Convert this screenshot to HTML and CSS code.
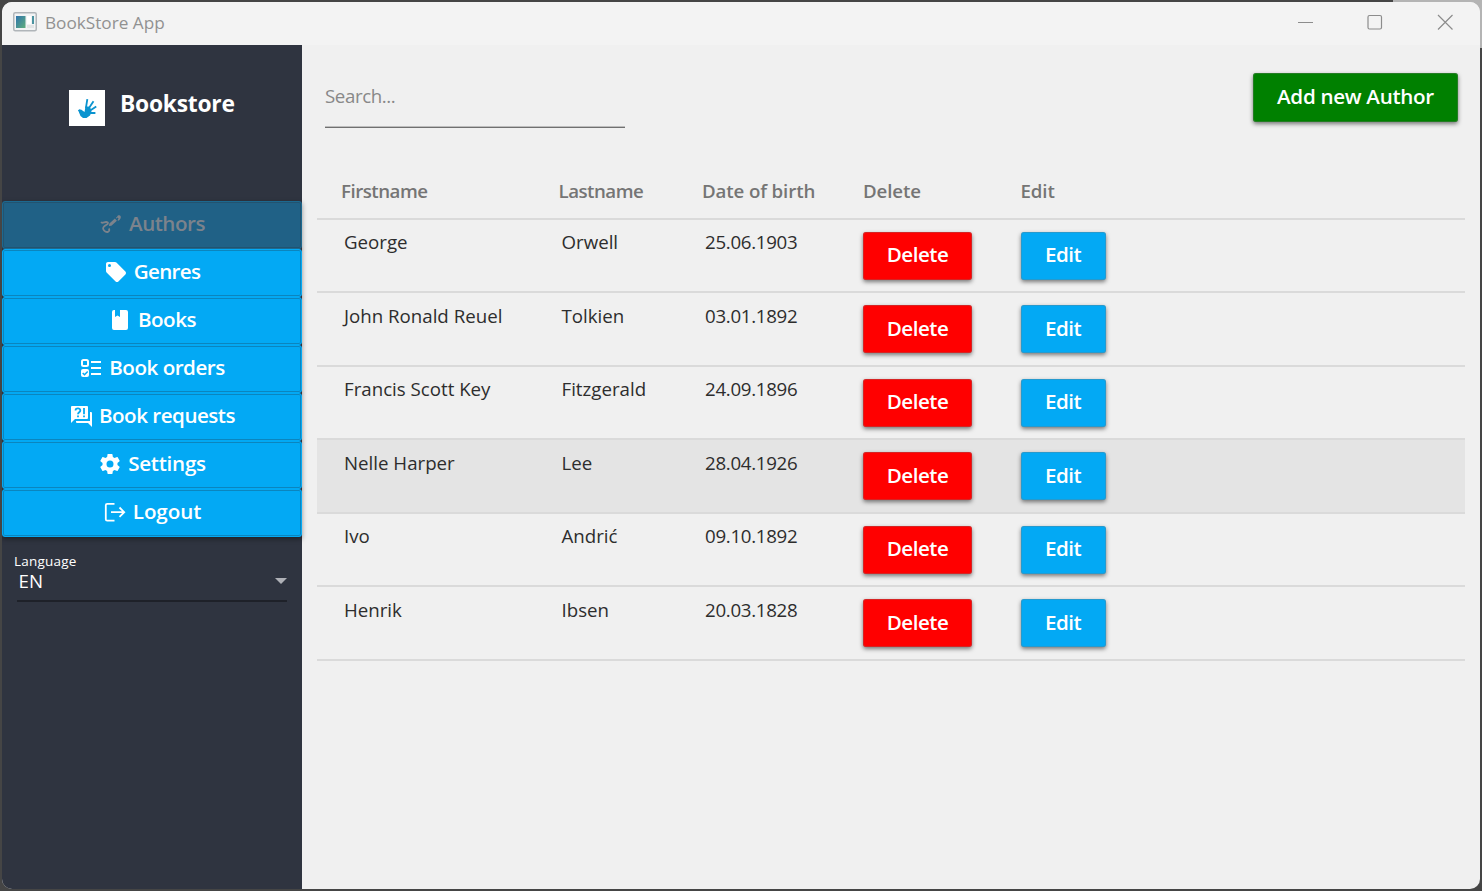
FILE: index.html
```html
<!DOCTYPE html>
<html lang="en">
<head>
<meta charset="utf-8">
<title>BookStore App</title>
<link rel="stylesheet" href="styles.css">
</head>
<body>
<div class="window">
  <header class="titlebar">
    <svg class="app-icon" width="24" height="20" viewBox="0 0 24 20">
      <defs><linearGradient id="g" x1="0" y1="0" x2="1" y2="1"><stop offset="0" stop-color="#2f74ad"/><stop offset="1" stop-color="#5fae7c"/></linearGradient></defs>
      <rect x=".75" y=".75" width="22.5" height="18" rx="1.5" fill="#f2f3f4" stroke="#b0b5b9" stroke-width="1.5"/>
      <rect x="3" y="4" width="9.5" height="12" fill="url(#g)"/>
      <rect x="14" y="4" width="4" height="8" fill="#fff"/><rect x="14" y="13" width="7" height="3" fill="#e2e4e5"/>
      <rect x="19" y="4" width="2" height="8" fill="#4b93a0"/>
    </svg>
    <span class="title">BookStore App</span>
    <div class="controls">
      <svg width="16" height="16" viewBox="0 0 16 16"><path d="M1 8.500h15"/></svg>
      <svg width="16" height="16" viewBox="0 0 16 16"><rect x="1" y="1.500" width="13.500" height="13.500" rx="1.500"/></svg>
      <svg width="16" height="16" viewBox="0 0 16 16"><path d="M1 1l14.500 14.500M15.500 1l-14.500 14.500"/></svg>
    </div>
  </header>
  <div class="body">
    <aside class="sidebar">
      <div class="brand">
        <svg class="logo" width="36" height="36" viewBox="0 0 36 36">
          <rect width="36" height="36" fill="#fff"/>
          <g fill="none" stroke="#0a93cf" stroke-linecap="square" stroke-width="1.800"><path d="M17 17.500L18.200 10M20 18l4-6M22 20l4.500-3M22 23h3.500M10.500 20.500l3.500 3"/></g>
          <path d="M9 20l3-.5 3.500 2.500 1-5.500h3l2 1.500 1 4-1.500 3.500-3.500 2.500h-3.500l-2.500-2z" fill="#0a93cf"/>
        </svg>
        <span class="brand-name">Bookstore</span>
      </div>
      <nav class="nav">
        <button class="nav-item disabled"><svg width="24" height="24" viewBox="0 0 24 24"><path d="M2.300 9.800C2.800 11.800 5 10.200 7 10c2.800-.2 2.300 1.700.5 2.700-2.300 1.300-4 2.300-3.300 4.300.8 2.300 3.200 3.400 4.800 2.800 1.500-.6 1.600-2 .8-3.300" fill="none" stroke="currentColor" stroke-width="1.800"/><path d="M10.400 11.600l5.500-5 2 2.200-5.500 4.900-2.500.3zM16.800 5.900l1.500-1.300c.2-1.600 2.700-2 3.400-.4.600 1.900-.6 3.500-2.400 4.600l-.8-.6 1-1.900-.9-.8-1 .9z"/></svg><span class="w-authors">Authors</span></button>
        <button class="nav-item"><svg width="24" height="24" viewBox="0 0 24 24"><path d="M5.500 7A1.500 1.500 0 0 1 4 5.500 1.500 1.500 0 0 1 5.500 4 1.500 1.500 0 0 1 7 5.500 1.500 1.500 0 0 1 5.500 7m15.910 4.580l-9-9C12.050 2.220 11.550 2 11 2H4c-1.110 0-2 .89-2 2v7c0 .55.220 1.050.59 1.410l8.990 9c.37.360.87.590 1.420.590s1.050-.230 1.410-.590l7-7c.37-.360.590-.860.590-1.410 0-.560-.230-1.060-.590-1.420z"/></svg><span class="w-genres">Genres</span></button>
        <button class="nav-item"><svg width="24" height="24" viewBox="0 0 24 24"><path d="M6 2h1v7l2.500-1.500L12 9V2h6a2 2 0 0 1 2 2v16a2 2 0 0 1-2 2H6a2 2 0 0 1-2-2V4a2 2 0 0 1 2-2z"/></svg><span class="w-books">Books</span></button>
        <button class="nav-item"><svg width="24" height="24" viewBox="0 0 24 24"><path d="M12 5h10v2H12zm0 6h10v2H12zm0 6h10v2H12z"/><rect x="3" y="4" width="6" height="6" rx="1.500" fill="none" stroke="currentColor" stroke-width="2"/><rect x="2" y="13" width="8" height="8" rx="2"/><path d="M3.700 17l1.800 1.800L8.700 15.500" fill="none" stroke="#03a9f4" stroke-width="1.500"/></svg><span class="w-orders">Book orders</span></button>
        <button class="nav-item"><svg width="24" height="24" viewBox="0 0 24 24"><path d="M18 15H6l-4 4V3a1 1 0 0 1 1-1h15a1 1 0 0 1 1 1v11a1 1 0 0 1-1 1m5-6v14l-4-4H8a1 1 0 0 1-1-1v-1h14V8h1a1 1 0 0 1 1 1"/><path d="M6.500 6.500C6.500 3.500 11.500 3.600 11.300 6.600 11.200 8.300 9 8.300 9 10.200M9 11.500v1.800M15 4v6.200M15 11.500v1.800" fill="none" stroke="#03a9f4" stroke-width="1.800"/></svg><span class="w-requests">Book requests</span></button>
        <button class="nav-item"><svg width="24" height="24" viewBox="0 0 24 24"><path d="M12 15.500A3.500 3.500 0 0 1 8.500 12 3.500 3.500 0 0 1 12 8.500a3.500 3.500 0 0 1 3.500 3.500 3.500 3.500 0 0 1-3.500 3.500m7.430-2.530c.04-.320.070-.640.070-.970s-.030-.660-.070-1l2.110-1.630c.190-.150.240-.420.120-.640l-2-3.460c-.120-.220-.390-.310-.610-.220l-2.490 1c-.520-.390-1.060-.730-1.690-.980l-.370-2.650A.506.506 0 0 0 14 2h-4c-.250 0-.460.180-.500.420l-.370 2.650c-.630.250-1.170.590-1.690.980l-2.490-1c-.220-.090-.490 0-.610.220l-2 3.460c-.130.220-.070.490.120.640L4.570 11c-.040.340-.070.670-.070 1s.030.650.070.970l-2.110 1.660c-.190.150-.250.420-.120.640l2 3.460c.120.220.390.300.610.220l2.490-1.010c.520.400 1.060.740 1.690.990l.370 2.650c.040.240.250.420.500.420h4c.250 0 .460-.180.500-.420l.370-2.650c.630-.260 1.170-.590 1.690-.990l2.490 1.010c.220.080.490 0 .610-.220l2-3.460c.120-.220.070-.490-.120-.640z"/></svg><span class="w-settings">Settings</span></button>
        <button class="nav-item"><svg width="24" height="24" viewBox="0 0 24 24"><path d="M11.500 3.800H4.200A1.400 1.400 0 0 0 2.800 5.200v14a1.400 1.400 0 0 0 1.400 1.400h7.300M8 12.200h13M16.500 7.500l4.700 4.700-4.700 4.700" fill="none" stroke="currentColor" stroke-width="1.800"/></svg><span class="w-logout">Logout</span></button>
      </nav>
      <div class="language">
        <label class="lang-label">Language</label>
        <div class="select"><span>EN</span><svg width="12" height="6" viewBox="0 0 12 6"><path d="M0 0h12L6 6z" fill="#afb1b7"/></svg></div>
      </div>
    </aside>
    <main class="content">
      <div class="toolbar">
        <div class="search"><span>Search...</span></div>
        <button class="btn add"><span>Add new Author</span></button>
      </div>
      <div class="table">
        <div class="row head"><span>Firstname</span><span>Lastname</span><span class="dob">Date of birth</span><span class="dob">Delete</span><span class="dob">Edit</span></div>
        <div class="row"><span>George</span><span>Orwell</span><span class="date">25.06.1903</span><button class="btn delete">Delete</button><button class="btn edit">Edit</button></div>
        <div class="row tall"><span>John Ronald Reuel</span><span>Tolkien</span><span class="date">03.01.1892</span><button class="btn delete">Delete</button><button class="btn edit">Edit</button></div>
        <div class="row"><span>Francis Scott Key</span><span>Fitzgerald</span><span class="date">24.09.1896</span><button class="btn delete">Delete</button><button class="btn edit">Edit</button></div>
        <div class="row tall hover"><span>Nelle Harper</span><span>Lee</span><span class="date">28.04.1926</span><button class="btn delete">Delete</button><button class="btn edit">Edit</button></div>
        <div class="row"><span>Ivo</span><span>Andrić</span><span class="date">09.10.1892</span><button class="btn delete">Delete</button><button class="btn edit">Edit</button></div>
        <div class="row tall"><span>Henrik</span><span>Ibsen</span><span class="date">20.03.1828</span><button class="btn delete">Delete</button><button class="btn edit">Edit</button></div>
      </div>
    </main>
  </div>
</div>
</body>
</html>
```
FILE: styles.css
```css
* { box-sizing: border-box; }
body {
  margin: 0;
  height: 891px;
  padding: 2px;
  overflow: hidden;
  background: linear-gradient(#b4b4b4, #b4b4b4) 100% 0 / 89px 48px no-repeat, #454545;
  font-family: "Open Sans", "Noto Sans", sans-serif;
}
button { border: 0; margin: 0; padding: 0; font: inherit; }
.window { height: 887px; display: flex; flex-direction: column; border-radius: 10px; overflow: hidden; background: #f0f0f0; }
.titlebar { height: 43px; flex: none; display: flex; align-items: center; padding: 0 27px 3px 11px; background: #f3f3f3; color: #919191; }
.title { margin-left: 8px; font-size: 17.2px; white-space: nowrap; }
.controls { margin-left: auto; display: flex; gap: 54px; }
.controls svg { fill: none; stroke: #8c8c8c; stroke-width: 1.2; }
.body { flex: 1; display: flex; }
.sidebar { width: 300px; background: #2f3440; color: #fff; }
.brand { height: 156px; display: flex; align-items: flex-start; padding: 45px 0 0 67px; }
.brand-name { margin-left: 15px; font-size: 22.8px; line-height: 28px; font-weight: 700; letter-spacing: -.25px; }
.nav { display: flex; flex-direction: column; box-shadow: 0 2px 5px rgba(0,0,0,.4); }
.nav-item { height: 48px; display: flex; align-items: center; justify-content: center; gap: 6px; padding-bottom: 2px; background: #03a9f4; color: #fff; border: 1px solid #03a9f4; border-radius: 3px; box-shadow: inset 0 0 0 1px #0b85be; font-size: 20.6px; font-weight: 600; letter-spacing: -.5px; }
.nav-item svg { fill: currentColor; flex: none; }
.nav-item span { white-space: nowrap; padding-bottom: 2px; }
.nav-item .w-genres { letter-spacing: -.7px; }
.nav-item .w-settings { letter-spacing: -.25px; }
.nav-item .w-logout { letter-spacing: -.1px; }
.disabled { background: #206186; border-color: #1c6990; box-shadow: inset 0 0 0 1px #23536f; color: #7c838c; }
.language { padding: 15px 15px 0 12px; }
.lang-label { display: block; font-size: 13.5px; line-height: 19px; letter-spacing: .2px; }
.select { display: flex; justify-content: space-between; align-items: center; height: 31px; margin-left: 3px; padding: 0 0 9px 1.5px; border-bottom: 2px solid #1e2129; font-size: 18.7px; }
.select span { padding-bottom: 2px; }
.content { flex: 1; padding: 28px 15px 0; }
.toolbar { display: flex; justify-content: space-between; padding: 0 7px 0 8px; height: 107px; }
.search { width: 300px; height: 55px; border-bottom: 1px solid #707070; box-shadow: inset 0 -1px 0 #bdbdbd; color: #888; font-size: 18.7px; line-height: 45px; letter-spacing: -.4px; }
.btn { display: block; height: 48px; padding-bottom: 3px; border-radius: 3px; color: #fff; font-size: 20.6px; font-weight: 600; letter-spacing: -.5px; box-shadow: 0 2px 4px rgba(0,0,0,.5), inset 0 0 0 1px rgba(120,120,120,.3); white-space: nowrap; }
.add { width: 205px; height: 49px; letter-spacing: -.3px; background: #008000; }
.delete { width: 109px; background: #f00; }
.edit { width: 85px; background: #03a9f4; }
.row { display: grid; grid-template-columns: 217.5px 143.5px 161px 157.5px 1fr; height: 73px; padding: 12px 24px 0; border-bottom: 2px solid #dadada; color: #2d2d2d; font-size: 18.7px; }
.row > span { padding-left: 3px; line-height: 20px; white-space: nowrap; }
.row .date { letter-spacing: -.3px; }
.row.tall > span { line-height: 22px; }
.row .btn { padding-bottom: 4px; }
.row.tall .btn { padding-bottom: 2px; }
.tall { height: 74px; }
.head { height: 40px; padding-top: 0; color: #757575; font-weight: 600; letter-spacing: -.5px; }
.row.head > span { padding-left: 0; line-height: 22px; }
.head .dob { letter-spacing: -.12px; }
.hover { background: #e4e4e4; }
```
